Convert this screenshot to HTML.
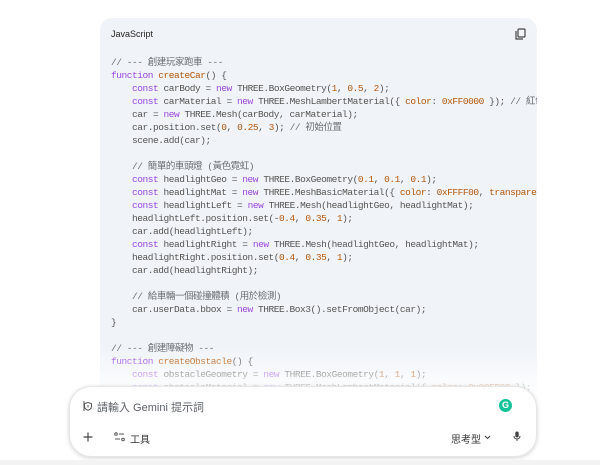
<!DOCTYPE html>
<html><head><meta charset="utf-8"><style>
*{margin:0;padding:0;box-sizing:border-box}
body{width:600px;height:465px;background:#fff;position:relative;overflow:hidden;font-family:"Liberation Sans","Noto Sans CJK TC",sans-serif}
.box{position:absolute;left:100px;top:18px;width:437px;height:380px;background:#f0f4f9;border-radius:12px 12px 0 0;overflow:hidden}
.lang{position:absolute;left:11px;top:11px;font-size:9px;color:#1f1f1f}
.copy{position:absolute;left:415px;top:10px}
pre{position:absolute;left:11px;top:38px;font-family:"Liberation Mono","Noto Sans CJK TC",monospace;font-size:9.5px;letter-spacing:-0.45px;line-height:13px;color:#555;white-space:pre}
.k{color:#9a47e0}.f{color:#b5570a}.n{color:#b5570a}.c{color:#6b6f73}
.fade{position:absolute;left:0;right:0;top:330px;height:60px;background:linear-gradient(rgba(255,255,255,0),#fff 85%)}
.inp{position:absolute;left:69px;top:386px;width:468px;height:71px;background:#fff;border-radius:22px;box-shadow:0 1px 4px rgba(0,0,0,.18);border:1px solid #e6e6e6}
.bot{position:absolute;left:0;top:460px;width:600px;height:5px;background:#f3f3f3}
</style></head><body>
<div class="box">
<div class="lang">JavaScript</div>
<svg class="copy" width="11" height="12" viewBox="0 0 11 12"><rect x="3" y="1" width="7" height="8" rx="1" fill="none" stroke="#444" stroke-width="1.2"/><path d="M1 3v8h7" fill="none" stroke="#444" stroke-width="1.2"/></svg>
<pre><span class="c">// --- 創建玩家跑車 ---</span>
<span class="k">function</span> <span class="f">createCar</span>() {
    <span class="k">const</span> carBody = <span class="k">new</span> THREE.BoxGeometry(<span class="n">1</span>, <span class="n">0.5</span>, <span class="n">2</span>);
    <span class="k">const</span> carMaterial = <span class="k">new</span> THREE.MeshLambertMaterial({ <span class="n">color</span>: <span class="n">0xFF0000</span> }); <span class="c">// 紅色</span>
    car = <span class="k">new</span> THREE.Mesh(carBody, carMaterial);
    car.position.set(<span class="n">0</span>, <span class="n">0.25</span>, <span class="n">3</span>); <span class="c">// 初始位置</span>
    scene.add(car);

    <span class="c">// 簡單的車頭燈 (黃色霓虹)</span>
    <span class="k">const</span> headlightGeo = <span class="k">new</span> THREE.BoxGeometry(<span class="n">0.1</span>, <span class="n">0.1</span>, <span class="n">0.1</span>);
    <span class="k">const</span> headlightMat = <span class="k">new</span> THREE.MeshBasicMaterial({ <span class="n">color</span>: <span class="n">0xFFFF00</span>, <span class="n">transparent</span>
    <span class="k">const</span> headlightLeft = <span class="k">new</span> THREE.Mesh(headlightGeo, headlightMat);
    headlightLeft.position.set(-<span class="n">0.4</span>, <span class="n">0.35</span>, <span class="n">1</span>);
    car.add(headlightLeft);
    <span class="k">const</span> headlightRight = <span class="k">new</span> THREE.Mesh(headlightGeo, headlightMat);
    headlightRight.position.set(<span class="n">0.4</span>, <span class="n">0.35</span>, <span class="n">1</span>);
    car.add(headlightRight);

    <span class="c">// 給車輛一個碰撞體積 (用於檢測)</span>
    car.userData.bbox = <span class="k">new</span> THREE.Box3().setFromObject(car);
}

<span class="c">// --- 創建障礙物 ---</span>
<span class="k">function</span> <span class="f">createObstacle</span>() {
    <span class="k">const</span> obstacleGeometry = <span class="k">new</span> THREE.BoxGeometry(<span class="n">1</span>, <span class="n">1</span>, <span class="n">1</span>);
    <span class="k">const</span> obstacleMaterial = <span class="k">new</span> THREE.MeshLambertMaterial({ <span class="n">color</span>: <span class="n">0x00FF00</span> });</pre>
<div class="fade"></div>
</div>
<div class="inp">
<svg style="position:absolute;left:13px;top:13px" width="10" height="12" viewBox="0 0 10 12"><path d="M1 1v10" stroke="#555" stroke-width="1"/><path d="M5 2.5l3.5 1.2v2.6c0 2-1.6 3.4-3.5 4-1.9-.6-3.5-2-3.5-4V3.7z" fill="none" stroke="#555" stroke-width="1"/><path d="M5 5v2.5" stroke="#555" stroke-width="1"/></svg>
<div style="position:absolute;left:27px;top:12px;font-size:11px;color:#5f6368">請輸入 Gemini 提示詞</div>
<div style="position:absolute;left:429px;top:12px;width:13px;height:13px;border-radius:50%;background:#15c39a;color:#fff;font-size:9px;font-weight:bold;text-align:center;line-height:13px">G</div>
<svg style="position:absolute;left:13px;top:45px" width="10" height="10" viewBox="0 0 10 10"><path d="M5 0.5v9M0.5 5h9" stroke="#444" stroke-width="1.2"/></svg>
<svg style="position:absolute;left:44px;top:45px" width="11" height="10" viewBox="0 0 11 10"><circle cx="2" cy="2" r="1.3" fill="none" stroke="#555"/><path d="M5 2h5M1 7h5" stroke="#555"/><circle cx="9" cy="7.5" r="1.3" fill="none" stroke="#555"/></svg>
<div style="position:absolute;left:60px;top:44px;font-size:10px;color:#333">工具</div>
<div style="position:absolute;left:381px;top:44px;font-size:10px;color:#333">思考型</div>
<svg style="position:absolute;left:414px;top:48px" width="7" height="5" viewBox="0 0 7 5"><path d="M1 1l2.5 2.5L6 1" fill="none" stroke="#444" stroke-width="1.1"/></svg>
<svg style="position:absolute;left:443px;top:44px" width="8" height="11" viewBox="0 0 8 11"><rect x="2.3" y="0.5" width="3.4" height="6" rx="1.7" fill="#444"/><path d="M1 5c0 2 1.4 3 3 3s3-1 3-3M4 8v2" fill="none" stroke="#444" stroke-width="1"/></svg>
</div>
<div class="bot"></div>
</body></html>
